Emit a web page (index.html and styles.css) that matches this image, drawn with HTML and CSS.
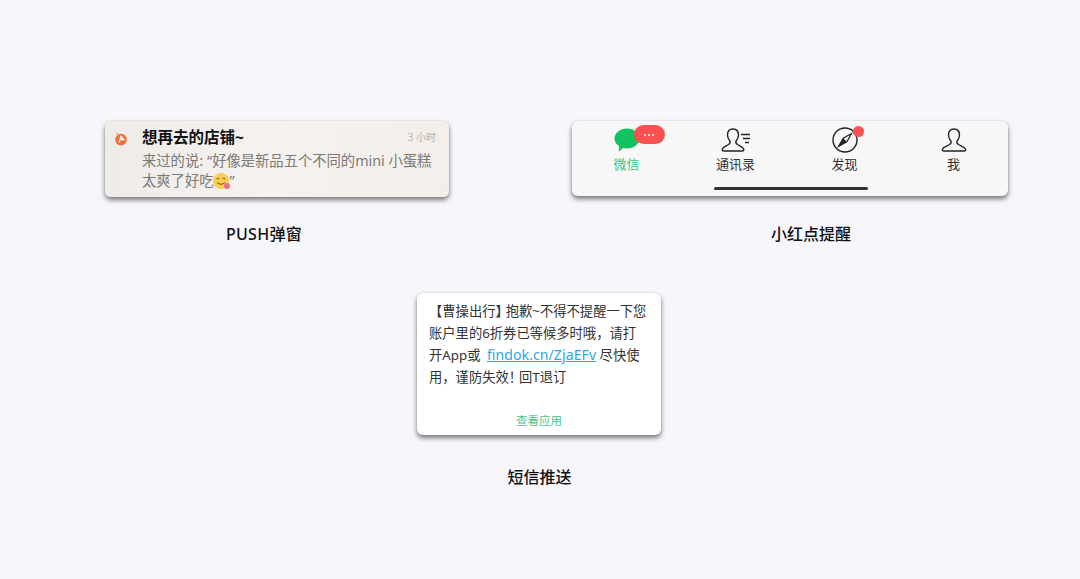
FILE: index.html
```html
<!DOCTYPE html>
<html lang="zh-CN">
<head>
    <meta charset="UTF-8">
    <title>触达方式</title>
    <link rel="stylesheet" href="styles.css">
</head>
<body>
<div class="row">
    <div class="item item-push">
        <div class="card push">
            <svg class="push-logo" viewBox="0 0 14 14">
                <path d="M3 2.500 L1.600 .6 L5 1.400 Z" fill="#c9a06a"/>
                <circle cx="7" cy="7.600" r="5.800" fill="#ee6f33"/>
                <path d="M5 10.500 L7 4.500 L9.600 7.600 L7 7.600" fill="none" stroke="#fff" stroke-width="1.400"/>
            </svg>
            <div class="push-main">
                <div class="push-head">
                    <span class="push-title">想再去的店铺~</span>
                    <span class="push-time">3 小时</span>
                </div>
                <p class="push-text">来过的说:<span class="quote">“</span>好像是新品五个不同的mini 小蛋糕<br>太爽了好吃<span class="emoji"><i class="tongue"></i><svg viewBox="0 0 16 16"><path d="M3.500 6 Q5 4 6.500 6 M9.500 6 Q11 4 12.500 6" fill="none" stroke="#7a5520" stroke-width="1"/><path d="M4 9.500 Q8 13 12 9.500" fill="none" stroke="#7a5520" stroke-width="1"/></svg></span>”</p>
            </div>
        </div>
        <div class="label">PUSH弹窗</div>
    </div>

    <div class="item item-tab">
        <div class="card tabbar">
            <div class="tabs">
                <div class="tab tab-on">
                    <div class="tab-icon">
                        <svg width="26" height="24" viewBox="0 0 26 24"><path d="M13 .5C20 .5 25.500 5 25.500 10.500C25.500 16 20 20.500 13 20.500C11.600 20.500 10.300 20.300 9 20L4.800 23.500L5 18C2.200 16.200 .5 13.500 .5 10.500C.5 5 6 .5 13 .5Z" fill="#12c15f"/></svg>
                        <span class="bubble"><i></i><i></i><i></i></span>
                    </div>
                    <span>微信</span>
                </div>
                <div class="tab">
                    <div class="tab-icon">
                        <svg width="30" height="24" viewBox="0 0 30 24" fill="none" stroke="#222" stroke-width="1.400"><path d="M12 1C8.500 1 6.500 3.500 6.500 7C6.500 10 8 12 9 13.300C9.500 14.500 9 15.500 7.500 16.500C5 18 2 19 1.300 21C1 22.200 1.500 23 3 23H21C22.500 23 23 22.200 22.700 21C22 19 19 18 16.500 16.500C15 15.500 14.500 14.500 15 13.300C16 12 17.500 10 17.500 7C17.500 3.500 15.500 1 12 1Z"/><path d="M20 6.500H29M22 10.500H29M24 14.500H28"/></svg>
                    </div>
                    <span>通讯录</span>
                </div>
                <div class="tab">
                    <div class="tab-icon">
                        <svg class="compass" width="26" height="26" viewBox="0 0 26 26"><circle cx="13" cy="13" r="12" fill="none" stroke="#222" stroke-width="1.400"/><path d="M19.500 6.500L14.800 14.800L6.500 19.500L11.200 11.200Z" fill="none" stroke="#222" stroke-width="1.200"/><path d="M11.200 11.200L14.800 14.800L6.500 19.500Z" fill="#222"/></svg>
                        <span class="dot"></span>
                    </div>
                    <span>发现</span>
                </div>
                <div class="tab">
                    <div class="tab-icon">
                        <svg width="26" height="24" viewBox="0 0 26 24" fill="none" stroke="#222" stroke-width="1.400"><path d="M13 1C9.500 1 7.500 3.500 7.500 7C7.500 10 9 12 10 13.300C10.500 14.500 10 15.500 8.500 16.500C6 18 2.500 19 1.500 21C1 22.200 1.500 23 3 23H23C24.500 23 25 22.200 24.500 21C23.500 19 20 18 17.500 16.500C16 15.500 15.500 14.500 16 13.300C17 12 18.500 10 18.500 7C18.500 3.500 16.500 1 13 1Z"/></svg>
                    </div>
                    <span>我</span>
                </div>
            </div>
            <div class="home-bar"></div>
        </div>
        <div class="label">小红点提醒</div>
    </div>
</div>

<div class="item item-sms">
    <div class="card sms">
        <p class="sms-text">【曹操出行<span class="tight">】</span>抱歉~不得不提醒一下您<br>账户里的6折券已等候多时哦，请打<br>开App或 <a class="sms-link">findok.cn/ZjaEFv</a> 尽快使<br>用，谨防失效<span class="tight">！</span>回T退订</p>
        <div class="sms-action">查看应用</div>
    </div>
    <div class="label">短信推送</div>
</div>
</body>
</html>
```
FILE: styles.css
```css
* {
    margin: 0;
    padding: 0;
    box-sizing: border-box;
}

body {
    height: 579px;
    overflow: hidden;
    background-color: #f6f6fb;
    color: #111;
    font-family: "Noto Sans", "Noto Sans CJK SC", sans-serif;
}

.row {
    display: flex;
    gap: 123px;
    padding: 121px 0 0 105px;
}

.card {
    border-radius: 6px;
    box-shadow: 0 0 2px rgba(0, 0, 0, .12), 0 3px 5px rgba(0, 0, 0, .5);
}

.label {
    font-size: 16px;
    font-weight: 500;
    line-height: 24px;
    text-align: center;
}

.item-push {
    width: 344px;
}

.item-push .label {
    margin: 25px 26px 0 0;
    letter-spacing: .3px;
}

.item-tab {
    width: 436px;
}

.item-tab .label {
    margin: 26px 0 0 42px;
}

.push {
    display: flex;
    height: 76px;
    padding: 5px 13px 0 9px;
    background: linear-gradient(100deg, #eeebe8, #f5f2ef 50%, #f3eee9);
}

.push-logo {
    flex: none;
    width: 14px;
    height: 14px;
    margin: 6px 14px 0 0;
}

.push-main {
    flex: 1;
}

.push-head {
    display: flex;
    justify-content: space-between;
    align-items: center;
    height: 20px;
}

.push-title {
    font-size: 15.500px;
    font-weight: 700;
}

.push-time {
    color: #b5b2ae;
    font-size: 10px;
}

.push-text {
    margin-top: 5px;
    color: #7c7976;
    font-size: 14.300px;
    line-height: 20px;
    white-space: nowrap;
}

.quote {
    margin-left: 4px;
}

.emoji {
    display: inline-block;
    position: relative;
    width: 16px;
    height: 16px;
    vertical-align: -3px;
    border-radius: 50%;
    background-color: #f8cf55;
}

.emoji svg {
    display: block;
    position: relative;
}

.tongue {
    position: absolute;
    right: -1px;
    bottom: 0;
    width: 6px;
    height: 6px;
    border-radius: 50%;
    background-color: #ee6f8f;
}

.tabbar {
    position: relative;
    height: 75px;
    background-color: #f7f7f7;
}

.tabs {
    display: grid;
    grid-template-columns: 109px 109px 109px 109px;
    padding-top: 5px;
}

.tab {
    display: flex;
    flex-direction: column;
    align-items: center;
    color: #333;
    font-size: 13px;
    line-height: 18px;
}

.tab-on {
    color: #3fc37f;
}

.tab-icon {
    display: flex;
    position: relative;
    justify-content: center;
    align-items: flex-end;
    height: 26px;
    margin-bottom: 3px;
}

.compass {
    margin-bottom: -1px;
}

.bubble {
    display: flex;
    position: absolute;
    top: -1px;
    left: 20px;
    justify-content: center;
    align-items: center;
    gap: 2px;
    width: 31px;
    height: 19px;
    border-radius: 10px;
    background-color: #fa5151;
}

.bubble i {
    width: 2px;
    height: 2px;
    border-radius: 50%;
    background-color: #fff;
}

.dot {
    position: absolute;
    top: 0;
    right: -6px;
    width: 11px;
    height: 11px;
    border-radius: 50%;
    background-color: #fa5151;
}

.home-bar {
    position: absolute;
    bottom: 6px;
    left: 142px;
    width: 154px;
    height: 3px;
    border-radius: 2px;
    background-color: #333;
}

.item-sms {
    width: 244px;
    margin: 47px 0 0 417px;
}

.item-sms .label {
    margin: 30px 0 0 1px;
}

.sms {
    height: 142px;
    padding: 7px 12px 0;
    border-radius: 6px;
    background-color: #fff;
}

.sms-text {
    height: 103px;
    color: #333;
    font-size: 13.300px;
    line-height: 22px;
    white-space: nowrap;
}

.tight {
    letter-spacing: -3px;
}

.sms-link {
    margin-left: 3px;
    color: #2ba6e6;
    font-size: 14px;
    letter-spacing: .1px;
    text-decoration: underline;
}

.sms-action {
    margin-top: 10px;
    color: #4fc48a;
    font-size: 11.500px;
    line-height: 16px;
    text-align: center;
}
```
